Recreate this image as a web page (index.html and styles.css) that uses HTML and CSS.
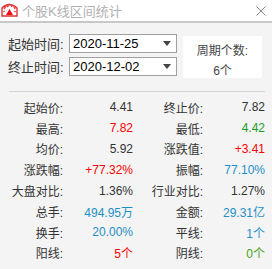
FILE: index.html
```html
<!DOCTYPE html>
<html>
    <head>
        <link rel="stylesheet" href="styles.css">
    </head>
    <body>
        <div id="window">
            <div class="titleBar">
                <svg class="appIcon" width="17" height="15" viewBox="0 0 17 15">
                    <path d="M1 13 L1 5 Q8 -2 16 5 L16 13 Z" fill="#fff" stroke="#d33" stroke-width="1.4"/>
                    <path d="M3 6 L5 3 M6 4 L8 2 M10 2 L11 4 M13 3 L14 6" stroke="#e44" stroke-width="1.6"/>
                    <path d="M5 12 L8.5 6 L12 12 Z" fill="#e11"/>
                    <path d="M2 9 L4 8 M15 9 L13 8" stroke="#e55" stroke-width="1.2"/>
                </svg>
                <span class="titleText">个股K线区间统计</span>
                <svg class="closeBtn" width="10" height="10" viewBox="0 0 10 10">
                    <path d="M0.5 0.5 L9.5 9.5 M9.5 0.5 L0.5 9.5" stroke="#888" stroke-width="1"/>
                </svg>
            </div>
            <div class="rangeArea">
                <div class="rangeFields">
                    <div class="fieldRow">
                        <span class="fieldLabel">起始时间:</span>
                        <div class="dateBox"><span>2020-11-25</span><i class="arrow"></i></div>
                    </div>
                    <div class="fieldRow">
                        <span class="fieldLabel">终止时间:</span>
                        <div class="dateBox"><span>2020-12-02</span><i class="arrow"></i></div>
                    </div>
                </div>
                <div class="periodBox">
                    <div>周期个数:</div>
                    <div>6个</div>
                </div>
            </div>
            <div class="divider"></div>
            <div class="statsGrid">
                <span class="lbl">起始价:</span><span class="val">4.41</span>
                <span class="lbl">终止价:</span><span class="val">7.82</span>
                <span class="lbl">最高:</span><span class="val red">7.82</span>
                <span class="lbl">最低:</span><span class="val green">4.42</span>
                <span class="lbl">均价:</span><span class="val">5.92</span>
                <span class="lbl">涨跌值:</span><span class="val red">+3.41</span>
                <span class="lbl">涨跌幅:</span><span class="val red">+77.32%</span>
                <span class="lbl">振幅:</span><span class="val blue">77.10%</span>
                <span class="lbl">大盘对比:</span><span class="val">1.36%</span>
                <span class="lbl">行业对比:</span><span class="val">1.27%</span>
                <span class="lbl">总手:</span><span class="val blue">494.95万</span>
                <span class="lbl">金额:</span><span class="val blue">29.31亿</span>
                <span class="lbl">换手:</span><span class="val blue">20.00%</span>
                <span class="lbl">平线:</span><span class="val blue">1个</span>
                <span class="lbl">阳线:</span><span class="val red">5个</span>
                <span class="lbl">阴线:</span><span class="val lime">0个</span>
            </div>
        </div>
    </body>
</html>
```
FILE: styles.css
```css
html, body {
    margin: 0;
    padding: 0;
    background: #f4f4f4;
}
#window {
    width: 272px;
    height: 269px;
    font-family: "Liberation Sans", "Noto Sans CJK SC", sans-serif;
    color: #333;
    overflow: hidden;
}
.titleBar {
    display: flex;
    align-items: center;
    height: 21px;
    background: #fff;
    border-bottom: 2px solid #c8c8c8;
}
.appIcon {
    margin-left: 1px;
    margin-right: 4px;
}
.titleText {
    flex: 1;
    font-size: 13px;
    color: #b0b0b0;
}
.closeBtn {
    margin-right: 6px;
}
.rangeArea {
    display: flex;
    padding: 11px 0 0 8px;
    height: 56px;
}
.rangeFields {
    display: flex;
    flex-direction: column;
    gap: 4px;
}
.fieldRow {
    display: flex;
    align-items: center;
    height: 19px;
}
.fieldLabel {
    width: 61px;
    font-size: 13px;
    color: #333;
}
.dateBox {
    display: flex;
    align-items: center;
    justify-content: space-between;
    box-sizing: border-box;
    width: 108px;
    height: 19px;
    padding: 0 5px 0 3px;
    background: #fff;
    border: 1px solid #a0a0a0;
    font-size: 13px;
    color: #000;
}
.arrow {
    width: 0;
    height: 0;
    border-left: 4.5px solid transparent;
    border-right: 4.5px solid transparent;
    border-top: 5px solid #444;
}
.periodBox {
    display: flex;
    flex-direction: column;
    align-items: center;
    gap: 3px;
    box-sizing: border-box;
    width: 79px;
    height: 42px;
    margin: 2px 0 0 6px;
    padding-top: 5px;
    background: #fff;
    border-radius: 2px;
    font-size: 12px;
    color: #444;
}
.divider {
    height: 1px;
    margin: 1px 7px 0 9px;
    background: #d4d4d4;
}
.statsGrid {
    display: grid;
    grid-template-columns: 55px 70px 70px 62px;
    grid-auto-rows: 20.8px;
    align-items: center;
    padding: 5px 0 0 8px;
    font-size: 12px;
}
.lbl {
    text-align: right;
    color: #333;
}
.val {
    text-align: right;
    color: #333;
}
.red {
    color: #f00;
}
.green {
    color: #1b9a2a;
}
.blue {
    color: #1e8fc6;
}
.lime {
    color: #4aa321;
}
```
